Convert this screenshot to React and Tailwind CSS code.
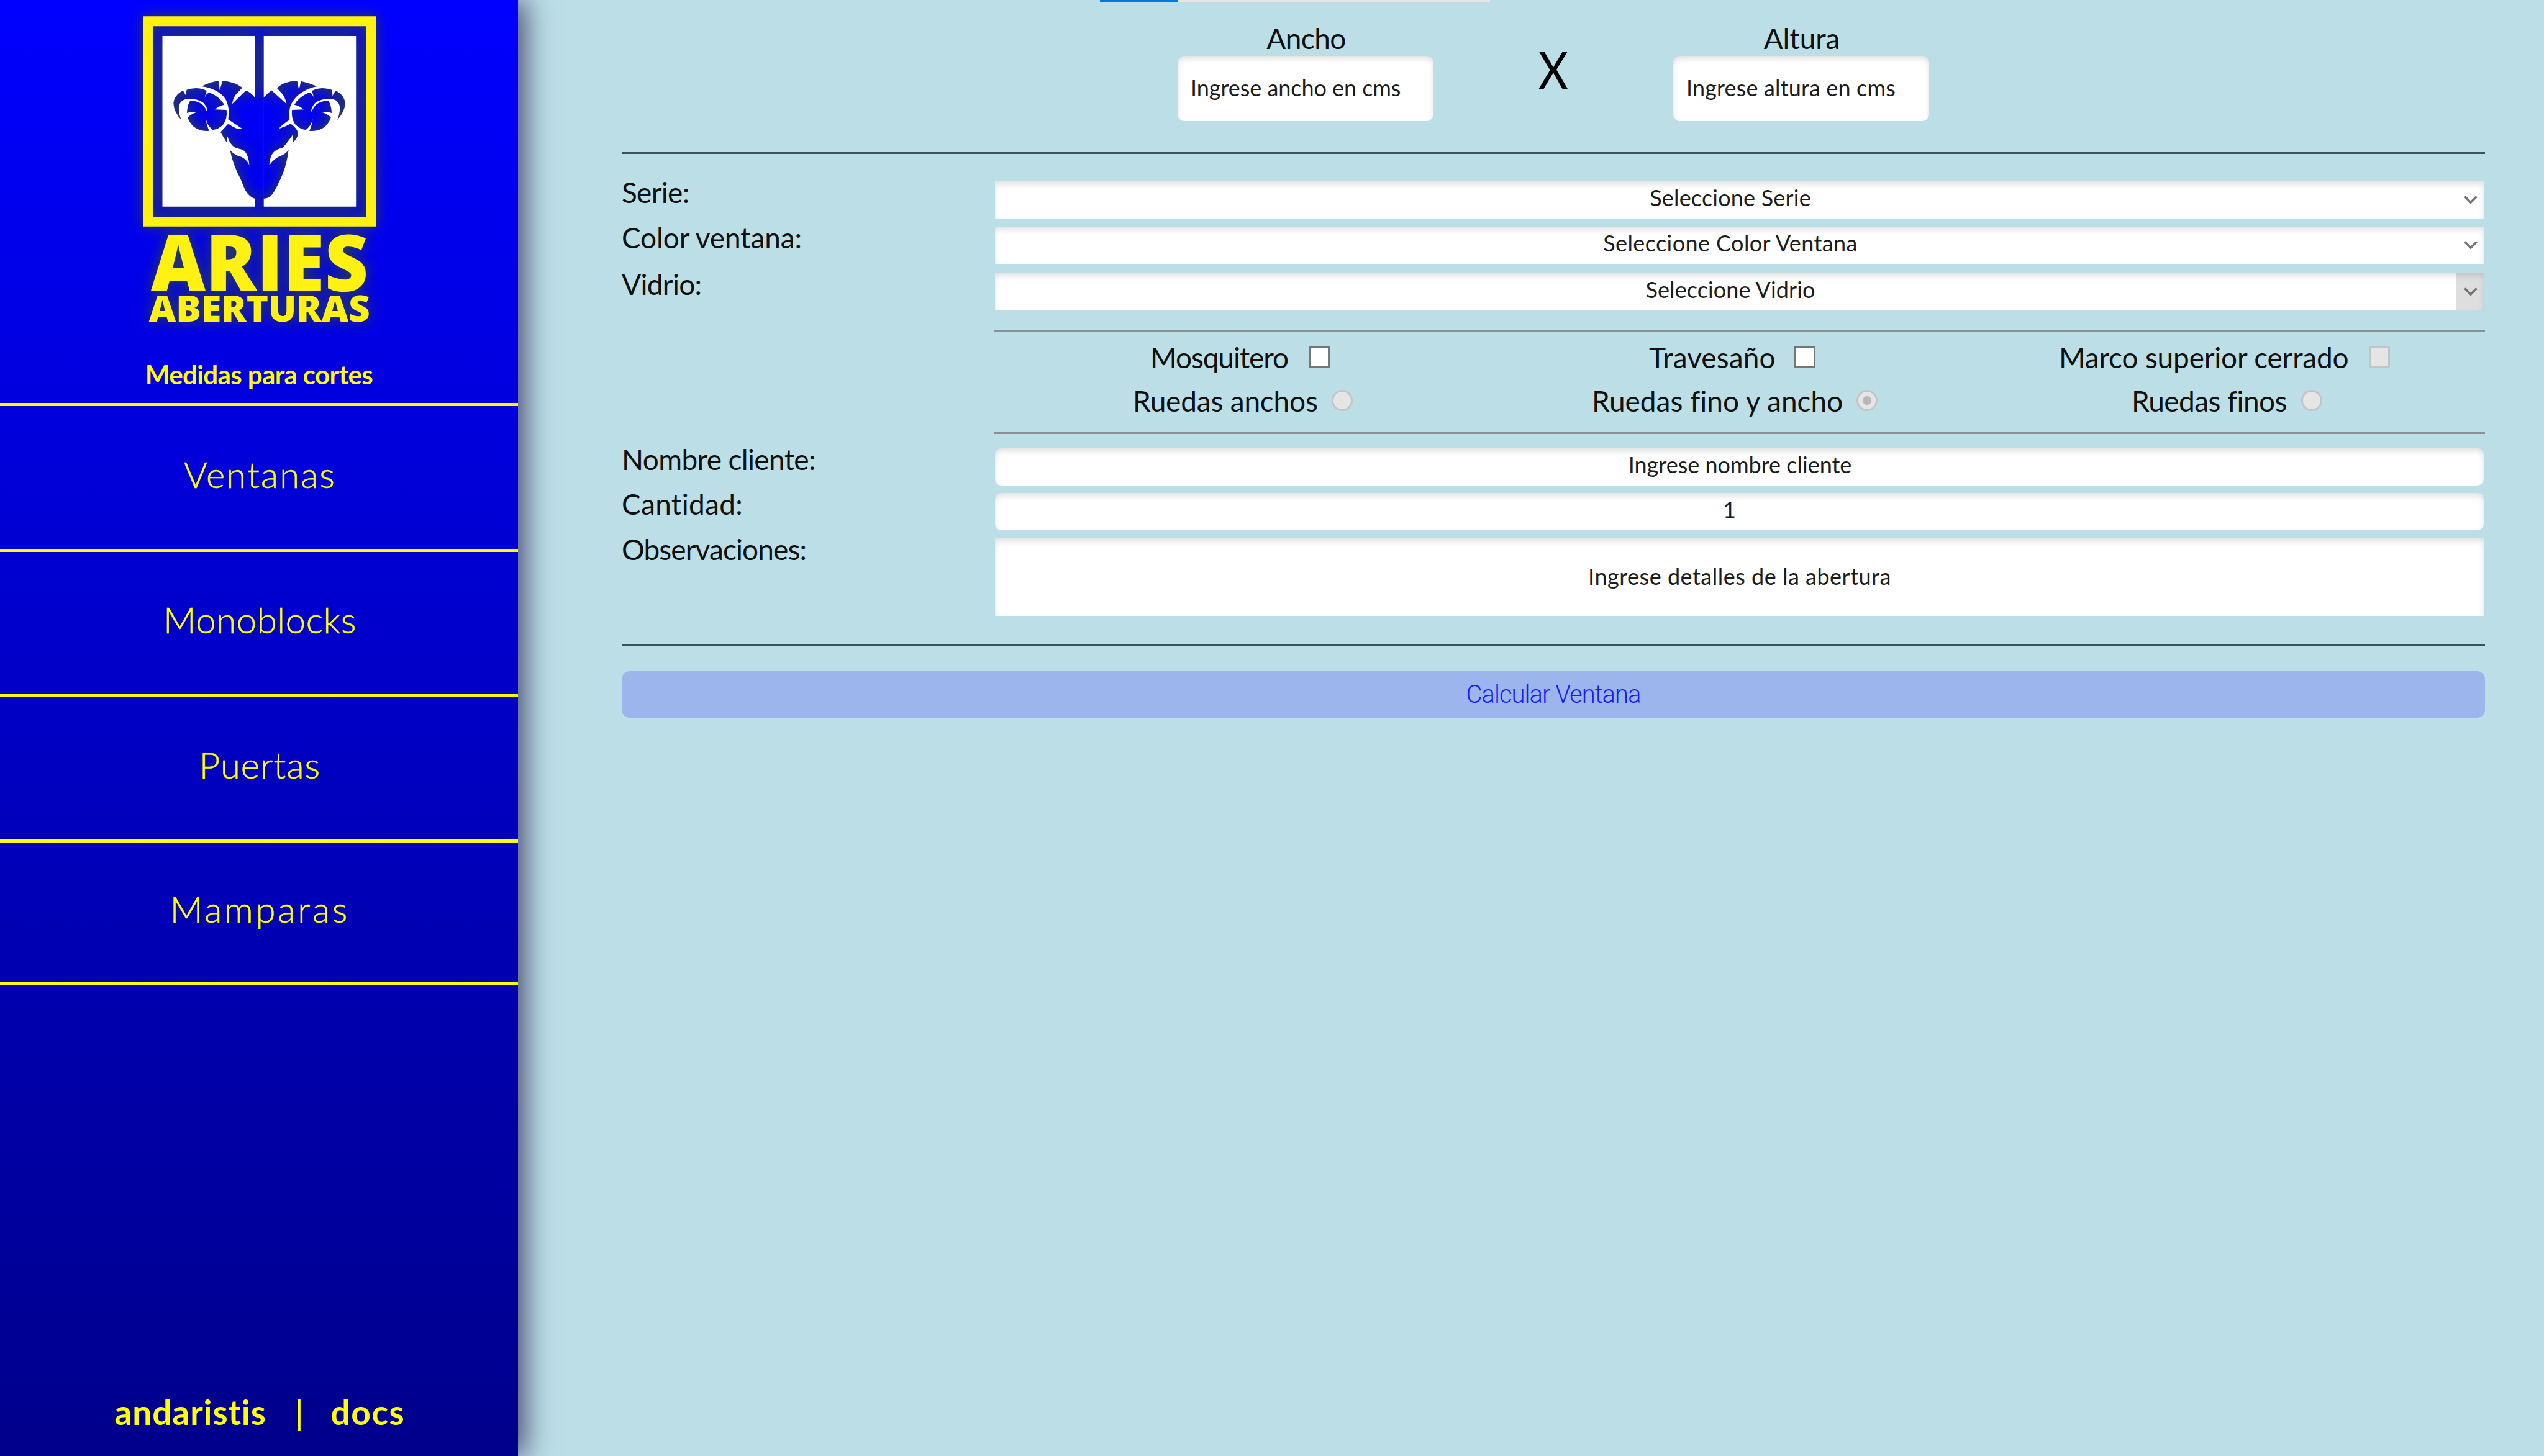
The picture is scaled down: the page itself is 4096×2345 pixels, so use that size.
const HORN =
  "M328 695Q285 650 282 600Q285 550 338 525L355 555L358 520Q410 503 455 517L475 526L462 568Q470 545 490 536Q550 560 577 607Q550 612 522 634L590 637Q596 690 570 722Q545 748 510 753Q480 730 470 690Q475 730 490 758Q440 765 400 735Q370 705 365 680Q390 655 425 648Q385 645 360 655Q362 610 378 585Q420 580 455 610Q470 630 478 648Q482 625 455 595Q420 572 370 572Q320 575 313 620Q312 660 328 695Z";

function Logo() {
  return (
    <svg viewBox="0 0 1560 1900" className="h-[528px] w-[433px] shrink-0 overflow-visible drop-shadow-[0_0_10.7px_rgb(47,68,60)]">
      <defs>
        <mask id="panes">
          <path fill="#fff" d="M218 208H755V1198H218ZM806 208H1341V1198H806Z" />
          <g fill="#000">
            <path d={HORN} />
            <path d={HORN} transform="matrix(-1 0 0 1 1560 0)" />
            <path d="M445 500Q500 472 545 468L550 522L567 468Q640 474 682 508L643 548Q630 565 622 602L700 526Q720 524 757 568L757 1152Q725 1145 700 1105Q690 1085 670 1035Q625 950 610 868Q625 890 655 902Q700 912 722 955Q715 880 680 867L640 855Q610 840 595 790L590 825L555 765L600 717Q630 740 660 748L682 746Q650 725 600 692L603 640Q598 590 575 562Q530 512 445 500Z" />
            <path d="M804 565L850 522L938 602Q930 560 905 535L882 510Q920 472 990 468L1000 470L1010 520L1022 470Q1070 480 1115 500Q1050 512 1000 555Q957 600 955 640L955 695Q920 715 892 746Q930 735 962 717Q1000 745 1005 770Q1005 800 975 825L975 780Q940 830 915 857Q880 862 860 885Q840 910 838 957Q865 920 900 905Q930 895 950 868Q940 950 915 1010Q880 1090 860 1120Q840 1150 804 1152Z" />
          </g>
        </mask>
      </defs>
      <path fill="#fff212" fillRule="evenodd" d="M105 93H1456V1313H105ZM162 151V1256H1399V151Z" />
      <rect x="200" y="190" width="1160" height="1020" fill="#fff" mask="url(#panes)" />
      <g fill="#fff212" fontFamily="Open Sans" fontWeight="800">
        <text x="150" y="1687" fontSize="451" textLength="1262" lengthAdjust="spacingAndGlyphs">ARIES</text>
        <text x="140" y="1865" fontSize="210" textLength="1282" lengthAdjust="spacingAndGlyphs">ABERTURAS</text>
      </g>
    </svg>
  );
}

function NavItem({ className, children }) {
  return (
    <a className={"flex items-center justify-center border-b-[5px] border-[#ffff00] pb-[12px] pl-[3px] text-[58px] font-light [-webkit-text-stroke:0.6px_#ffff00] " + className}>
      {children}
    </a>
  );
}

const control =
  "flex items-center justify-center bg-white text-[36px] text-[#1c1c1c] shadow-[inset_0_5px_10px_rgba(0,0,0,0.12)] ";

function Row({ label, tracking, className, children }) {
  return (
    <div className={"flex items-start " + className}>
      <div className={"w-[601px] shrink-0 leading-[36px] " + tracking}>{label}</div>
      {children}
    </div>
  );
}

function Select({ tracking, shaded, children }) {
  return (
    <div className={control + "relative h-[60px] w-[2397px] pr-[29px] pb-[8px] " + tracking}>
      {children}
      <div className={"absolute inset-y-0 right-0 flex w-[44px] items-center justify-center pl-[2px] " + (shaded ? "bg-black/13" : "")}>
        <svg viewBox="0 0 22 14" className="h-[14px] w-[22px] fill-none stroke-[#737373] stroke-[3.6]">
          <path d="M1.5 1.5L11 11L20.5 1.5" />
        </svg>
      </div>
    </div>
  );
}

function Size({ label, tracking, placeholder, placeholderTracking }) {
  return (
    <div className="w-[412px] pt-[32px]">
      <div className={"h-[58px] pl-[2px] text-center leading-[59px] " + tracking}>{label}</div>
      <div className={"flex h-[105px] items-center rounded-[11px] bg-white pb-[4px] pl-[21px] text-[36px] whitespace-nowrap text-[#1c1c1c] shadow-[inset_0_5px_10px_rgba(0,0,0,0.12)] " + placeholderTracking}>
        {placeholder}
      </div>
    </div>
  );
}

function Box({ disabled }) {
  return (
    <span className={"size-[34px] shrink-0 border-[3px] " + (disabled ? "border-[#c4c4c4] bg-[#e5e5e5]" : "border-[#767676] bg-white")} />
  );
}

function Radio({ checked }) {
  return (
    <span className="flex size-[34px] shrink-0 items-center justify-center rounded-full border-[3px] border-[#c4c4c4] bg-[#e5e5e5]">
      {checked && <span className="size-[14px] rounded-full bg-[#b8b8b8]" />}
    </span>
  );
}

export default function App() {
  return (
    <div className="flex h-[2345px] w-[4096px] overflow-hidden bg-[#bbdee7] font-['Lato',sans-serif] text-[46px] text-[#111] [font-variant-ligatures:none]">
      <aside className="relative z-10 flex w-[834px] shrink-0 flex-col bg-linear-to-b from-[#0000ff] to-[#00008b] text-[#ffff00] shadow-[11px_0_43px_rgba(20,0,58,0.68)]">
        <div className="flex justify-center">
          <Logo />
        </div>
        <div className="mt-[45px] text-center text-[42px] leading-[60px] font-bold tracking-[-0.6px]">Medidas para cortes</div>
        <nav className="mt-[16px] border-t-[5px] border-[#ffff00]">
          <NavItem className="h-[235px] tracking-[2.1px]">Ventanas</NavItem>
          <NavItem className="h-[234px] tracking-[0.6px]">Monoblocks</NavItem>
          <NavItem className="h-[234px] tracking-[1px]">Puertas</NavItem>
          <NavItem className="h-[230px] tracking-[3.8px]">Mamparas</NavItem>
        </nav>
        <footer className="mt-auto flex justify-center pb-[36px] pl-[3px] text-[55px] leading-[70px] font-bold">
          <span className="w-[247px] tracking-[0.9px]">andaristis</span>
          <span className="w-[101px] text-center font-normal">|</span>
          <span className="w-[120px] tracking-[1.6px]">docs</span>
        </footer>
      </aside>

      <main className="relative w-[3167px] pl-[167px]">
        <div className="absolute top-0 left-[937px] flex h-[3px] w-[628px] bg-[#e5e5e5]">
          <div className="w-[125px] bg-[#0078d7]" />
        </div>

        <div className="flex h-[245px] pl-[895px]">
          <Size label="Ancho" tracking="tracking-[-0.6px]" placeholder="Ingrese ancho en cms" placeholderTracking="tracking-[-0.05px]" />
          <div className="w-[386px] pt-[61px] text-center text-[86px] leading-[100px] text-black">
            <span className="inline-block scale-x-88">X</span>
          </div>
          <Size label="Altura" tracking="tracking-[-0.1px]" placeholder="Ingrese altura en cms" placeholderTracking="tracking-[0.15px]" />
        </div>
        <div className="h-[3px] bg-[#3b525e]" />

        <Row label="Serie:" tracking="tracking-[-0.7px]" className="mt-[44px]">
          <Select tracking="tracking-[0.2px]">Seleccione Serie</Select>
        </Row>
        <Row label="Color ventana:" tracking="tracking-[-0.15px]" className="mt-[13px]">
          <Select tracking="tracking-[0.4px]">Seleccione Color Ventana</Select>
        </Row>
        <Row label="Vidrio:" tracking="tracking-[-0.7px]" className="mt-[15px]">
          <Select tracking="tracking-[0.1px]" shaded>Seleccione Vidrio</Select>
        </Row>

        <div className="mt-[31px] ml-[599px] border-y-4 border-[#8a9194] pt-[5px] pb-[15px] whitespace-nowrap">
          <div className="flex h-[70px] items-center">
            <span className="ml-[252px] w-[255px] tracking-[-1.1px]">Mosquitero</span>
            <Box />
            <span className="ml-[514px] w-[234px] tracking-[0.1px]">Travesaño</span>
            <Box />
            <span className="ml-[392px] w-[499px] tracking-[-0.2px]">Marco superior cerrado</span>
            <Box disabled />
          </div>
          <div className="flex h-[70px] items-center">
            <span className="ml-[224px] w-[320px] tracking-[-0.2px]">Ruedas anchos</span>
            <Radio />
            <span className="ml-[385px] w-[426px]">Ruedas fino y ancho</span>
            <Radio checked />
            <span className="ml-[409px] w-[273px] tracking-[-0.6px]">Ruedas finos</span>
            <Radio />
          </div>
        </div>

        <Row label="Nombre cliente:" tracking="tracking-[-0.65px]" className="mt-[23px]">
          <div className={control + "h-[60px] w-[2397px] rounded-[10px] pb-[8px] pl-[2px]"}>Ingrese nombre cliente</div>
        </Row>
        <Row label="Cantidad:" tracking="tracking-[0.3px]" className="mt-[12px]">
          <div className={control + "h-[60px] w-[2397px] rounded-[10px] pr-[32px] pb-[8px]"}>1</div>
        </Row>
        <Row label="Observaciones:" tracking="tracking-[-0.9px]" className="mt-[13px]">
          <div className={control + "h-[125px] w-[2397px] pb-[4px] pl-[1px] tracking-[0.5px]"}>Ingrese detalles de la abertura</div>
        </Row>
        <div className="mt-[45px] h-[3px] bg-[#3b525e]" />

        <button className="mt-[41px] flex h-[75px] w-full items-center justify-center rounded-[13px] bg-[#9cb5ed] font-['Roboto',sans-serif] text-[40px] font-light tracking-[-1px] text-[#1a1aff]">
          Calcular Ventana
        </button>
      </main>
    </div>
  );
}
